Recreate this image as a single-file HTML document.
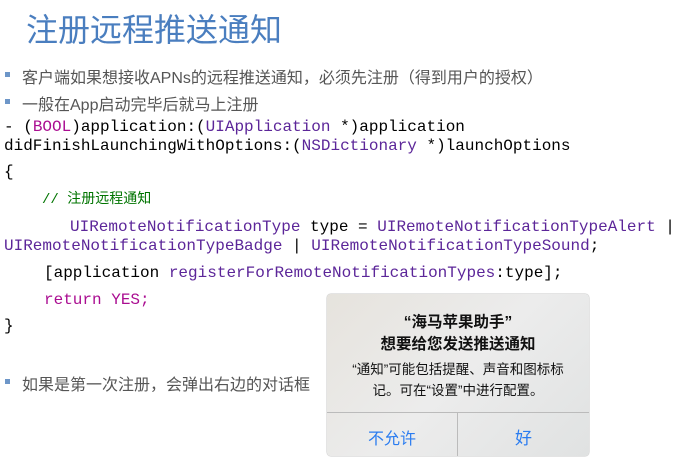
<!DOCTYPE html>
<html><head><meta charset="utf-8"><style>
body{margin:0;width:684px;height:457px;background:#fff;position:relative;overflow:hidden;font-family:"Liberation Sans","Noto Sans CJK SC",sans-serif}
.a{position:absolute;white-space:pre}
.t{left:26px;top:5px;font-size:32px;color:#4a7ebf}
.b{font-size:16px;color:#555;left:22px}
.b:before{content:"";position:absolute;left:-17px;top:8px;width:5px;height:5px;background:#6d96c8}
.c{font-family:"Liberation Mono","Noto Sans CJK SC",monospace;font-size:16px;color:#000;left:4px;line-height:20px}
.p{color:#5c2699}.k{color:#aa0d91}.g{color:#007400}
.d{position:absolute;left:327px;top:294px;width:262px;height:162px;background:linear-gradient(135deg,#e6e3dd,#ececec 50%,#e0e2e2);border-radius:4px;text-align:center;color:#111;box-shadow:0 0 1px #555}
</style></head><body>
<div class="a t">注册远程推送通知</div>
<div class="a b" style="top:64px">客户端如果想接收APNs的远程推送通知，必须先注册（得到用户的授权）</div>
<div class="a b" style="top:91px">一般在App启动完毕后就马上注册</div>
<div class="a c" style="top:117px">- (<span class="k">BOOL</span>)application:(<span class="p">UIApplication</span> *)application</div>
<div class="a c" style="top:136px">didFinishLaunchingWithOptions:(<span class="p">NSDictionary</span> *)launchOptions</div>
<div class="a c" style="top:162px">{</div>
<div class="a c g" style="top:190px;left:42px;font-size:14px">// 注册远程通知</div>
<div class="a c" style="top:217px;left:70px"><span class="p">UIRemoteNotificationType</span> type = <span class="p">UIRemoteNotificationTypeAlert</span> |</div>
<div class="a c" style="top:236px"><span class="p">UIRemoteNotificationTypeBadge</span> | <span class="p">UIRemoteNotificationTypeSound</span>;</div>
<div class="a c" style="top:263px;left:44px">[application <span class="p">registerForRemoteNotificationTypes</span>:type];</div>
<div class="a c k" style="top:290px;left:44px">return YES;</div>
<div class="a c" style="top:316px">}</div>
<div class="a b" style="top:371px">如果是第一次注册，会弹出右边的对话框</div>
<div class="d">
<div style="position:absolute;top:18px;width:100%;font-size:15.5px;line-height:22px;font-weight:bold">“海马苹果助手”<br>想要给您发送推送通知</div>
<div style="position:absolute;top:65px;width:100%;font-size:13.5px;line-height:21px">“通知”可能包括提醒、声音和图标标<br>记。可在“设置”中进行配置。</div>
<div style="position:absolute;top:118px;left:0;width:100%;border-top:1px solid #bbb"></div>
<div style="position:absolute;top:118px;left:130px;height:44px;border-left:1px solid #bbb"></div>
<div style="position:absolute;top:131px;left:0;width:130px;color:#2a7cf0;font-size:16px">不允许</div>
<div style="position:absolute;top:130px;left:131px;width:131px;color:#2a7cf0;font-size:17px">好</div>
</div>
</body></html>
